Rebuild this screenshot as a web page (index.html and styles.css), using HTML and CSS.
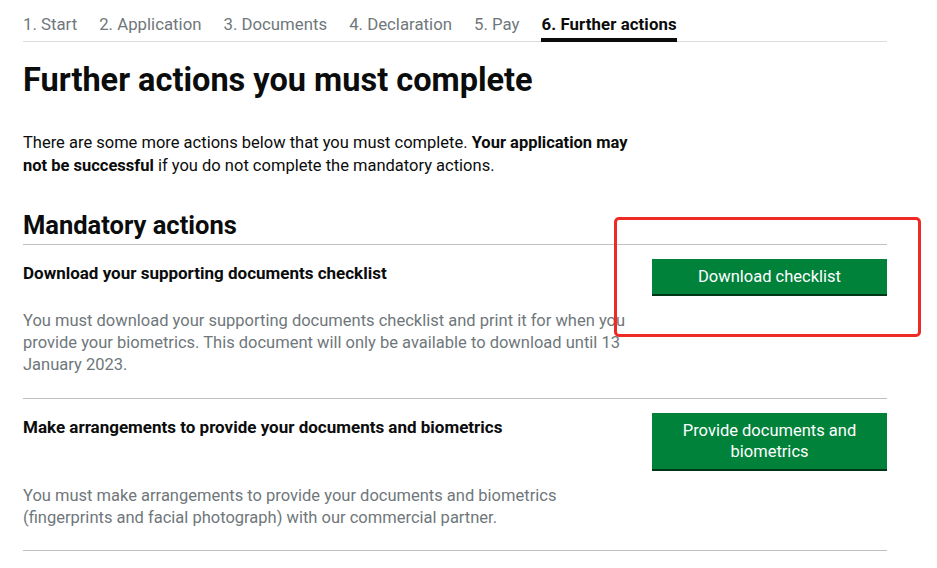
FILE: index.html
```html
<!DOCTYPE html>
<html lang="en">
<head>
<meta charset="utf-8">
<title>Further actions</title>
<link rel="stylesheet" href="styles.css">
</head>
<body>
<div class="page">
  <nav class="steps">
    <ul>
      <li>1. Start</li>
      <li>2. Application</li>
      <li>3. Documents</li>
      <li>4. Declaration</li>
      <li>5. Pay</li>
      <li class="active">6. Further actions</li>
    </ul>
  </nav>
  <h1 class="title">Further actions you must complete</h1>
  <p class="intro">There are some more actions below that you must complete. <strong>Your application may not be successful</strong> if you do not complete the mandatory actions.</p>
  <h2 class="section">Mandatory actions</h2>
  <div class="action">
    <div class="action-head">
      <h3>Download your supporting documents checklist</h3>
      <a class="btn">Download checklist</a>
    </div>
    <p class="desc">You must download your supporting documents checklist and print it for when you provide your biometrics. This document will only be available to download until 13 January 2023.</p>
  </div>
  <div class="action">
    <div class="action-head">
      <h3>Make arrangements to provide your documents and biometrics</h3>
      <a class="btn">Provide documents and biometrics</a>
    </div>
    <p class="desc">You must make arrangements to provide your documents and biometrics (fingerprints and facial photograph) with our commercial partner.</p>
  </div>
</div>
<div class="annotation"></div>
</body>
</html>
```

FILE: styles.css
```css
* { box-sizing: border-box; }
body {
  margin: 0;
  font-family: Roboto, "Liberation Sans", sans-serif;
  color: #0b0c0c;
  background: #fff;
}
.page {
  width: 864px;
  margin-left: 23px;
}
.steps ul {
  list-style: none;
  margin: 0;
  padding: 0;
  display: flex;
  gap: 22px;
  border-bottom: 1px solid #dcdcdc;
}
.steps li {
  font-size: 16.8px;
  line-height: 20px;
  color: #6f777b;
  padding: 14px 0 4px;
  border-bottom: 4px solid transparent;
  margin-bottom: -1px;
}
.steps li.active {
  color: #0b0c0c;
  font-weight: 700;
  border-bottom-color: #0b0c0c;
  letter-spacing: 0.1px;
}
.title {
  font-size: 32.5px;
  line-height: 38px;
  font-weight: 700;
  margin: 19px 0 0;
}
.intro {
  width: 620px;
  font-size: 16.5px;
  line-height: 23px;
  margin: 32px 0 0;
}
.section {
  font-size: 25.5px;
  line-height: 32px;
  font-weight: 700;
  margin: 32px 0 0;
  padding-bottom: 3px;
  border-bottom: 1px solid #bfc1c3;
}
.action {
  padding: 14px 0 22px;
  border-bottom: 1px solid #bfc1c3;
}
.action-head {
  display: flex;
  justify-content: space-between;
  align-items: flex-start;
}
.action-head h3 {
  font-size: 17px;
  line-height: 22px;
  font-weight: 700;
  margin: 3px 0 0;
}
.btn {
  width: 235px;
  flex: none;
  background: #00823b;
  color: #fff;
  font-size: 16.5px;
  line-height: 21px;
  text-align: center;
  padding: 7px 20px 7px;
  box-shadow: 0 2px 0 #003618;
}
.desc {
  width: 605px;
  margin: 16px 0 0;
  font-size: 16.5px;
  line-height: 22px;
  color: #6f777b;
}
.action:last-child .desc {
  margin-bottom: -1px;
}
.annotation {
  position: absolute;
  left: 614px;
  top: 217px;
  width: 307px;
  height: 120px;
  border: 3px solid #ee2a24;
  border-radius: 5px;
}
```
